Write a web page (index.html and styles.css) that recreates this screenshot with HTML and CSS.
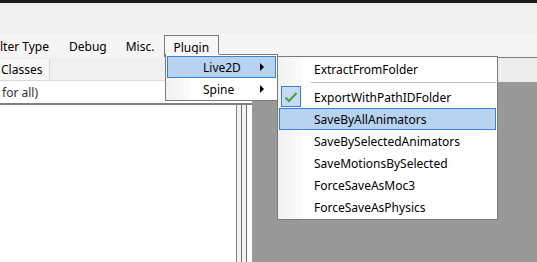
FILE: index.html
```html
<!DOCTYPE html>
<html>
<head>
<meta charset="utf-8">
<link rel="stylesheet" href="styles.css">
</head>
<body>
<div class="titlebar"></div>
<div class="toolspace"></div>
<div class="menubar">
  <div class="mitem first">lter Type</div>
  <div class="mitem">Debug</div>
  <div class="mitem">Misc.</div>
  <div class="mitem open">Plugin</div>
</div>
<div class="main">
  <div class="left">
    <div class="tabs"><div class="tab">Classes</div></div>
    <div class="filter">for all)</div>
    <div class="listrow">
      <div class="list"></div>
      <div class="splitter">
        <div class="s1"></div><div class="s2"></div><div class="s3"></div><div class="s2"></div><div class="s4"></div>
      </div>
    </div>
  </div>
  <div class="right">
    <div class="righthead"></div>
    <div class="rightbody"></div>
  </div>
</div>

<div class="dropdown">
  <div class="ditem hl"><span class="dlabel">Live2D</span><span class="arrow"></span></div>
  <div class="ditem"><span class="dlabel">Spine</span><span class="arrow"></span></div>
</div>

<div class="submenu">
  <div class="sitem"><span class="slabel">ExtractFromFolder</span></div>
  <div class="sep"></div>
  <div class="sitem"><span class="check"><svg width="14" height="12" viewBox="0 0 14 12"><path d="M1.5 6.5 L5 10 L12.5 2" fill="none" stroke="#4d9a3e" stroke-width="2"/></svg></span><span class="slabel">ExportWithPathIDFolder</span></div>
  <div class="sitem hl"><span class="slabel">SaveByAllAnimators</span></div>
  <div class="sitem"><span class="slabel">SaveBySelectedAnimators</span></div>
  <div class="sitem"><span class="slabel">SaveMotionsBySelected</span></div>
  <div class="sitem"><span class="slabel">ForceSaveAsMoc3</span></div>
  <div class="sitem"><span class="slabel">ForceSaveAsPhysics</span></div>
</div>
</body>
</html>
```

FILE: styles.css
```css
* { box-sizing: border-box; }
html, body { margin: 0; padding: 0; }
body {
  width: 537px;
  height: 262px;
  overflow: hidden;
  background: #f0f0f0;
  font-family: "Noto Sans", "Open Sans", sans-serif;
  font-size: 12px;
  color: #000;
  display: flex;
  flex-direction: column;
  position: relative;
}
.titlebar { height: 3px; background: #1c1c1c; flex: none; }
.toolspace { height: 30px; background: #f0f0f0; flex: none; }
.menubar {
  height: 24px;
  flex: none;
  display: flex;
  align-items: stretch;
  background: #f5f5f5;
}
.mitem {
  padding: 2px 10px 0 9px;
  display: flex;
  align-items: center;
  height: 22px;
  margin-top: 2px;
  line-height: 1;
}
.mitem.first { padding-left: 0; margin-right: 1px; }
.mitem.open {
  border: 1px solid #7a7a7a;
  border-bottom: none;
  background: #f7f7f7;
  padding-left: 8px;
  width: 55px;
}
.main { flex: 1; display: flex; min-height: 0; }
.left { width: 252px; flex: none; display: flex; flex-direction: column; }
.tabs { height: 24px; display: flex; align-items: flex-end; border-bottom: 1px solid #dadada; }
.tab {
  height: 21px;
  width: 50px;
  padding-left: 1px;
  display: flex;
  align-items: center;
  background: #f7f7f7;
  border-right: 1px solid #d9d9d9;
}
.filter {
  height: 22px;
  background: #fff;
  padding-left: 2px;
  display: flex;
  align-items: center;
  color: #333;
}
.listrow { flex: 1; display: flex; border-top: 2px solid #808080; }
.list { width: 237px; background: #fff; border-right: 1px solid #808080; }
.splitter { flex: 1; display: flex; }
.s1 { width: 4px; background: #f2f2f2; }
.s2 { width: 1px; background: #6e6e6e; }
.s3 { width: 4px; background: #f2f2f2; }
.s4 { flex: 1; background: #fdfdfd; }
.right { flex: 1; display: flex; flex-direction: column; }
.righthead { height: 25px; background: #ededed; border-top: 1px solid #7a7a7a; }
.rightbody { flex: 1; background: #999999; }

.dropdown {
  position: absolute;
  left: 165px;
  top: 54px;
  width: 113px;
  height: 47px;
  border: 1px solid #7a7a7a;
  background: linear-gradient(to right, #f1f1f1 0, #fbfbfb 24px, #fff 25px);
  padding: 1px 1px;
}
.dropdown::before {
  content: "";
  position: absolute;
  left: 0;
  top: -1px;
  width: 53px;
  height: 1px;
  background: #f7f7f7;
}
.ditem {
  height: 22px;
  display: flex;
  align-items: center;
  padding-left: 35px;
  position: relative;
  border: 1px solid transparent;
}
.ditem.hl { background: #b8d3f0; border-color: #3b7ed8; }
.dlabel { flex: 1; }
.arrow {
  width: 0; height: 0;
  border-top: 4px solid transparent;
  border-bottom: 4px solid transparent;
  border-left: 4px solid #000;
  margin-right: 11px;
}

.submenu {
  position: absolute;
  left: 277px;
  top: 56px;
  width: 221px;
  height: 164px;
  border: 1px solid #7a7a7a;
  background: linear-gradient(to right, #f1f1f1 0, #fbfbfb 24px, #fff 25px);
  padding: 1px 1px 0 1px;
}
.sitem {
  height: 22px;
  display: flex;
  align-items: center;
  padding-left: 34px;
  position: relative;
  border: 1px solid transparent;
}
.sitem.hl { background: #b8d3f0; border-color: #3b7ed8; }
.sep { height: 6px; margin-left: 32px; position: relative; }
.sep::after {
  content: "";
  position: absolute;
  left: 0; right: 0; top: 2px;
  height: 1px;
  background: #bdbdbd;
}
.check {
  position: absolute;
  left: 1px;
  top: -1px;
  width: 20px;
  height: 21px;
  border: 1px solid #3b7ed8;
  background: #c4dbf3;
  display: flex;
  align-items: center;
  justify-content: center;
}
```
